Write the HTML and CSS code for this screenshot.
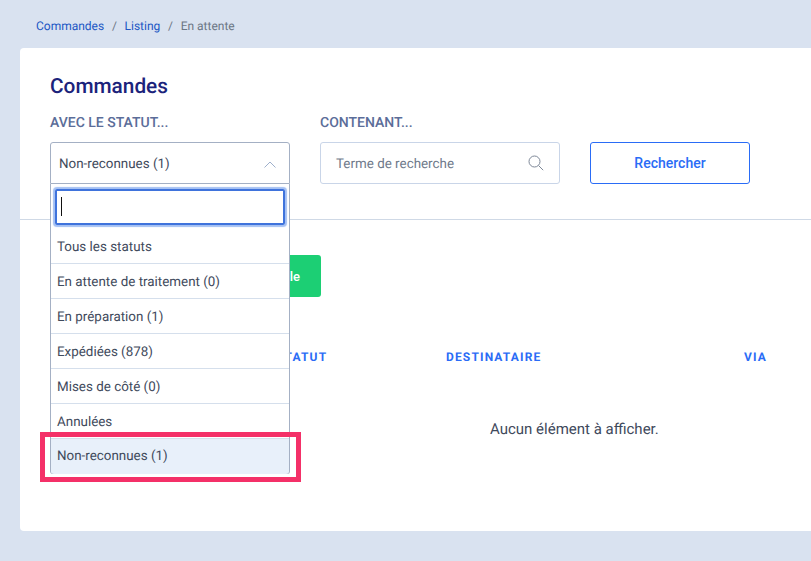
FILE: index.html
```html
<!DOCTYPE html>
<html lang="fr">
<head>
<meta charset="utf-8">
<title>Commandes</title>
<link rel="stylesheet" href="styles.css">
</head>
<body>
<nav class="crumbs">
  <a class="crumb-link">Commandes</a><span class="sep">/</span><a class="crumb-link">Listing</a><span class="sep">/</span><span class="crumb-current">En attente</span>
</nav>
<main class="card">
  <h1 class="title">Commandes</h1>
  <section class="filters">
    <div class="field field-status">
      <div class="label">AVEC LE STATUT...</div>
      <div class="select">
        <span>Non-reconnues (1)</span>
        <svg class="chevron" width="12" height="7" viewBox="0 0 12 7"><path d="M0.5 6.5 L6 1 L11.5 6.5" fill="none" stroke="#9fb0cc" stroke-width="1"/></svg>
      </div>
      <div class="dropdown">
        <div class="search-wrap"><div class="search-box"><span class="caret"></span></div></div>
        <ul class="options">
          <li class="option">Tous les statuts</li>
          <li class="option">En attente de traitement (0)</li>
          <li class="option">En préparation (1)</li>
          <li class="option">Expédiées (878)</li>
          <li class="option">Mises de côté (0)</li>
          <li class="option">Annulées</li>
          <li class="option option-active">Non-reconnues (1)</li>
        </ul>
      </div>
      <div class="highlight"></div>
    </div>
    <div class="field">
      <div class="label">CONTENANT...</div>
      <div class="input">
        <span>Terme de recherche</span>
        <svg class="magnifier" width="16" height="16" viewBox="0 0 16 16"><circle cx="6.5" cy="6.5" r="5.5" fill="none" stroke="#7d8797" stroke-width="1"/><path d="M10.6 10.6 L15.2 15.2" stroke="#7d8797" stroke-width="1"/></svg>
      </div>
    </div>
    <button class="search-btn">Rechercher</button>
  </section>
  <hr class="divider">
  <div class="action"><button class="green-btn">Nouvelle</button></div>
  <div class="thead">
    <span></span><span>STATUT</span><span>DESTINATAIRE</span><span>VIA</span>
  </div>
  <p class="empty">Aucun élément à afficher.</p>
</main>
</body>
</html>
```
FILE: styles.css
```css
* { box-sizing: border-box; }
html, body { margin: 0; height: 100%; overflow: hidden; }
body {
  background: #d9e2f0;
  font-family: Roboto, "Liberation Sans", sans-serif;
  color: #3f4a5c;
  width: 811px;
  text-rendering: geometricPrecision;
}
.crumbs {
  height: 48px;
  padding: 18px 0 0 36px;
  font-size: 12px;
  line-height: 16px;
}
.crumb-link { color: #2157c4; }
.crumb-current { color: #6b7685; }
.sep { color: #6b7685; margin: 0 7.7px; }
.card {
  margin-left: 20px;
  width: 791px;
  height: 483px;
  background: #fff;
  border-radius: 4px 0 0 4px;
  padding: 27px 30px 0;
}
.title {
  margin: 0;
  font-size: 20.8px;
  line-height: 24px;
  font-weight: 500;
  color: #1b237b;
}
.filters {
  display: flex;
  align-items: flex-end;
  gap: 30px;
  margin-top: 16px;
}
.field { width: 240px; position: relative; }
.label {
  font-size: 14px;
  line-height: 16px;
  font-weight: 500;
  color: #5b6d99;
  margin-bottom: 11px;
}
.select, .input {
  height: 42px;
  display: flex;
  align-items: center;
  justify-content: space-between;
  font-size: 13.4px;
  border-radius: 3px;
  padding-top: 2px;
}
.select {
  border: 1px solid #a4b0c4;
  border-bottom-left-radius: 0;
  border-bottom-right-radius: 0;
  padding-left: 8px;
  padding-right: 13px;
}
.input {
  border: 1px solid #c9d5e8;
  padding-left: 15px;
  padding-right: 15px;
  color: #6f7a8b;
}
.magnifier { margin-bottom: 3px; }
.search-btn {
  width: 160px;
  height: 42px;
  background: #fff;
  border: 1px solid #2a6cf6;
  border-radius: 3px;
  color: #2a6cf6;
  font: 500 14px Roboto, sans-serif;
}
.dropdown {
  position: absolute;
  left: 0;
  top: 69px;
  width: 240px;
  height: 290px;
  background: #fff;
  border: 1px solid #a4b0c4;
  border-top: 0;
  border-radius: 0 0 3px 3px;
  z-index: 3;
}
.search-wrap { padding: 5px 4px 0; }
.search-box {
  height: 36px;
  border: 2px solid #3f73dc;
  border-radius: 2px;
  box-shadow: 0 0 1px 2px #a4c0f3;
  padding: 6px 0 0 4px;
}
.caret { display: block; width: 1px; height: 19px; background: #111; }
.options { list-style: none; margin: 4px 0 0; padding: 0; }
.option {
  height: 35px;
  padding: 0 6px;
  font-size: 13.4px;
  line-height: 37px;
  border-bottom: 1px solid #d5dfec;
}
.option:last-child { border-bottom: 0; line-height: 35px; }
.option-active { background: #e8f0fa; border-radius: 0 0 3px 3px; }
.highlight {
  position: absolute;
  left: -10px;
  top: 317px;
  width: 261px;
  height: 50px;
  border: 5px solid #f43068;
  z-index: 4;
}
.divider {
  margin: 35px -30px 0;
  border: 0;
  border-top: 1px solid #cfd9e6;
}
.action { margin-top: 35px; }
.green-btn {
  width: 271px;
  height: 42px;
  background: #1ccf74;
  border: 0;
  border-radius: 3px;
  color: #fff;
  font: 500 13px Roboto, sans-serif;
  text-align: right;
  padding-right: 21px;
}
.thead {
  display: grid;
  grid-template-columns: 226px 170px 298px auto;
  margin-top: 52px;
  font-size: 12px;
  line-height: 16px;
  font-weight: 700;
  letter-spacing: 1.15px;
  color: #2a6cf6;
}
.empty {
  margin: 54px 0 0 440px;
  font-size: 15px;
  line-height: 20px;
}
```
